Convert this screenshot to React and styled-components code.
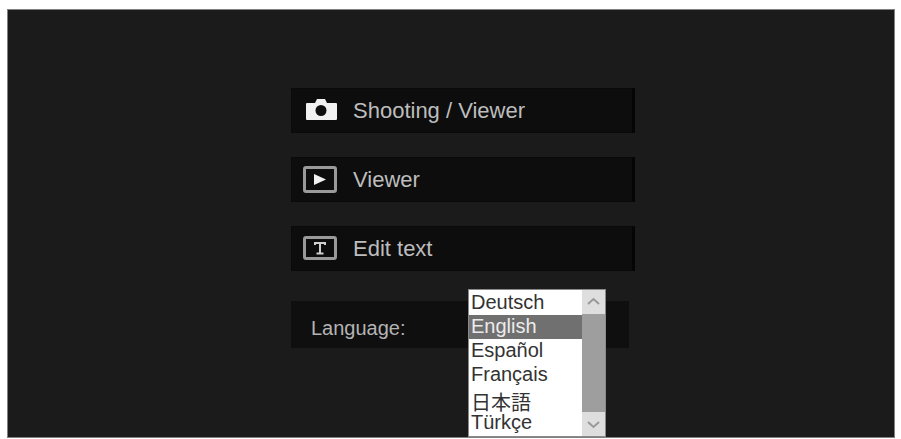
import React, { useState } from 'react'
import styled, { createGlobalStyle } from 'styled-components';


const GlobalStyle = createGlobalStyle`
  * {
    box-sizing: border-box;
  }

  body {
    margin: 0;
    background: #fff;
    font-family: "Liberation Sans", Arial, "Noto Sans CJK JP", sans-serif;
  }
`

const Page = styled.div`
  min-height: 100vh;
  padding: 9px 6px 1px 7px;
  display: flex;
`

const Screen = styled.main`
  flex: 1;
  display: flex;
  justify-content: center;
  padding: 78px 0 86px 24px;
  border: 1px solid #808080;
  background: #1b1b1b;
`

const Menu = styled.nav`
  width: 344px;
  display: flex;
  flex-direction: column;
  gap: 24px;
`

const MenuButton = styled.button`
  height: 45px;
  display: flex;
  align-items: center;
  gap: 16px;
  padding: 0 11px;
  border: 1px solid #0a0a0a;
  border-right: 3px solid #050505;
  background: #0d0d0d;
  color: #bdbdbd;
  font-family: inherit;
  font-size: 22px;
  line-height: 24px;
  text-align: left;
`

const MenuIcon = styled.svg`
  width: 34px;
  height: 28px;
  flex: none;
`

const LanguageRow = styled.div`
  position: relative;
  height: 47px;
  display: flex;
  align-items: center;
  margin: 6px 6px 0 0;
  padding: 6px 20px 0;
  background: #0f0f0f;
`

const LanguageLabel = styled.label`
  color: #b4b4b4;
  font-size: 20px;
  line-height: 24px;
`

const Dropdown = styled.div`
  position: absolute;
  top: -12px;
  left: 177px;
  width: 138px;
  display: flex;
  border: 1px solid #8a8a8a;
  background: #fff;
`

const LanguageSelect = styled.select`
  flex: 1;
  min-width: 0;
  height: 146px;
  padding: 1px 0;
  border: 0;
  border-radius: 0;
  outline: 0;
  overflow: hidden;
  background: #fff;
  color: #333;
  font-family: inherit;
  font-size: 20px;
`

const LanguageOption = styled.option`
  height: 24px;
  min-height: 24px;
  padding: 0 2px;
  line-height: 24px;
  color: #333;

  &:checked {
    background: #707070 linear-gradient(#707070, #707070);
    color: #ececec;
  }
`

const ScrollBar = styled.div`
  width: 23px;
  display: flex;
  flex-direction: column;
  background: #dedede;
`

const ScrollThumb = styled.div`
  flex: 1;
  background: #9e9e9e;
`

const ScrollArrow = styled.svg`
  width: 23px;
  height: 24px;
  fill: none;
  stroke: #999;
  stroke-width: 2;
`

const CameraIcon = () => (
  <MenuIcon viewBox="0 0 34 28" aria-hidden="true">
    <path
      d="M4 6h8l2-4h8l2 4h9q1 0 1 1v15q0 1-1 1H4q-1 0-1-1V7q0-1 1-1z"
      fill="#f2f2f2"
    />
    <circle cx="18" cy="13.5" r="5.5" fill="#101010" />
  </MenuIcon>
)

const PlayIcon = () => (
  <MenuIcon viewBox="0 0 34 28" aria-hidden="true">
    <rect x="1.5" y="1.5" width="31" height="24" rx="1.5" fill="none" stroke="#9a9a9a" strokeWidth="3" />
    <path d="M11 8L23 13.5L11 19z" fill="#f2f2f2" />
  </MenuIcon>
)

const TextIcon = () => (
  <MenuIcon viewBox="0 0 34 28" aria-hidden="true">
    <rect x="1.5" y="2.5" width="31" height="21" rx="1.5" fill="none" stroke="#9a9a9a" strokeWidth="3" />
    <path d="M12 10V8h10v2M17 8V18.500M13.5 18.500h7" fill="none" stroke="#d0d0d0" strokeWidth="2" />
  </MenuIcon>
)

const items = [
  { title: 'Shooting / Viewer', Icon: CameraIcon },
  { title: 'Viewer', Icon: PlayIcon },
  { title: 'Edit text', Icon: TextIcon }
]

const languages = ['Deutsch', 'English', 'Español', 'Français', '日本語', 'Türkçe']

export default () => {
  const [language, setLanguage] = useState('English')

  return <Page>
    <GlobalStyle />
    <Screen>
      <Menu>
        {
          items.map(({ title, Icon }) => (
            <MenuButton key={title} type="button">
              <Icon />
              {title}
            </MenuButton>
          ))
        }
        <LanguageRow>
          <LanguageLabel htmlFor="language">Language:</LanguageLabel>
          <Dropdown>
            <LanguageSelect
              id="language"
              size={6}
              value={language}
              onChange={e => setLanguage(e.target.value)}
            >
              {
                languages.map(name => (
                  <LanguageOption key={name} value={name}>{name}</LanguageOption>
                ))
              }
            </LanguageSelect>
            <ScrollBar aria-hidden="true">
              <ScrollArrow viewBox="0 0 23 24"><path d="M6 14l5.500-5 5.500 5" /></ScrollArrow>
              <ScrollThumb />
              <ScrollArrow viewBox="0 0 23 24"><path d="M6 10l5.500 5 5.500-5" /></ScrollArrow>
            </ScrollBar>
          </Dropdown>
        </LanguageRow>
      </Menu>
    </Screen>
  </Page>
}
